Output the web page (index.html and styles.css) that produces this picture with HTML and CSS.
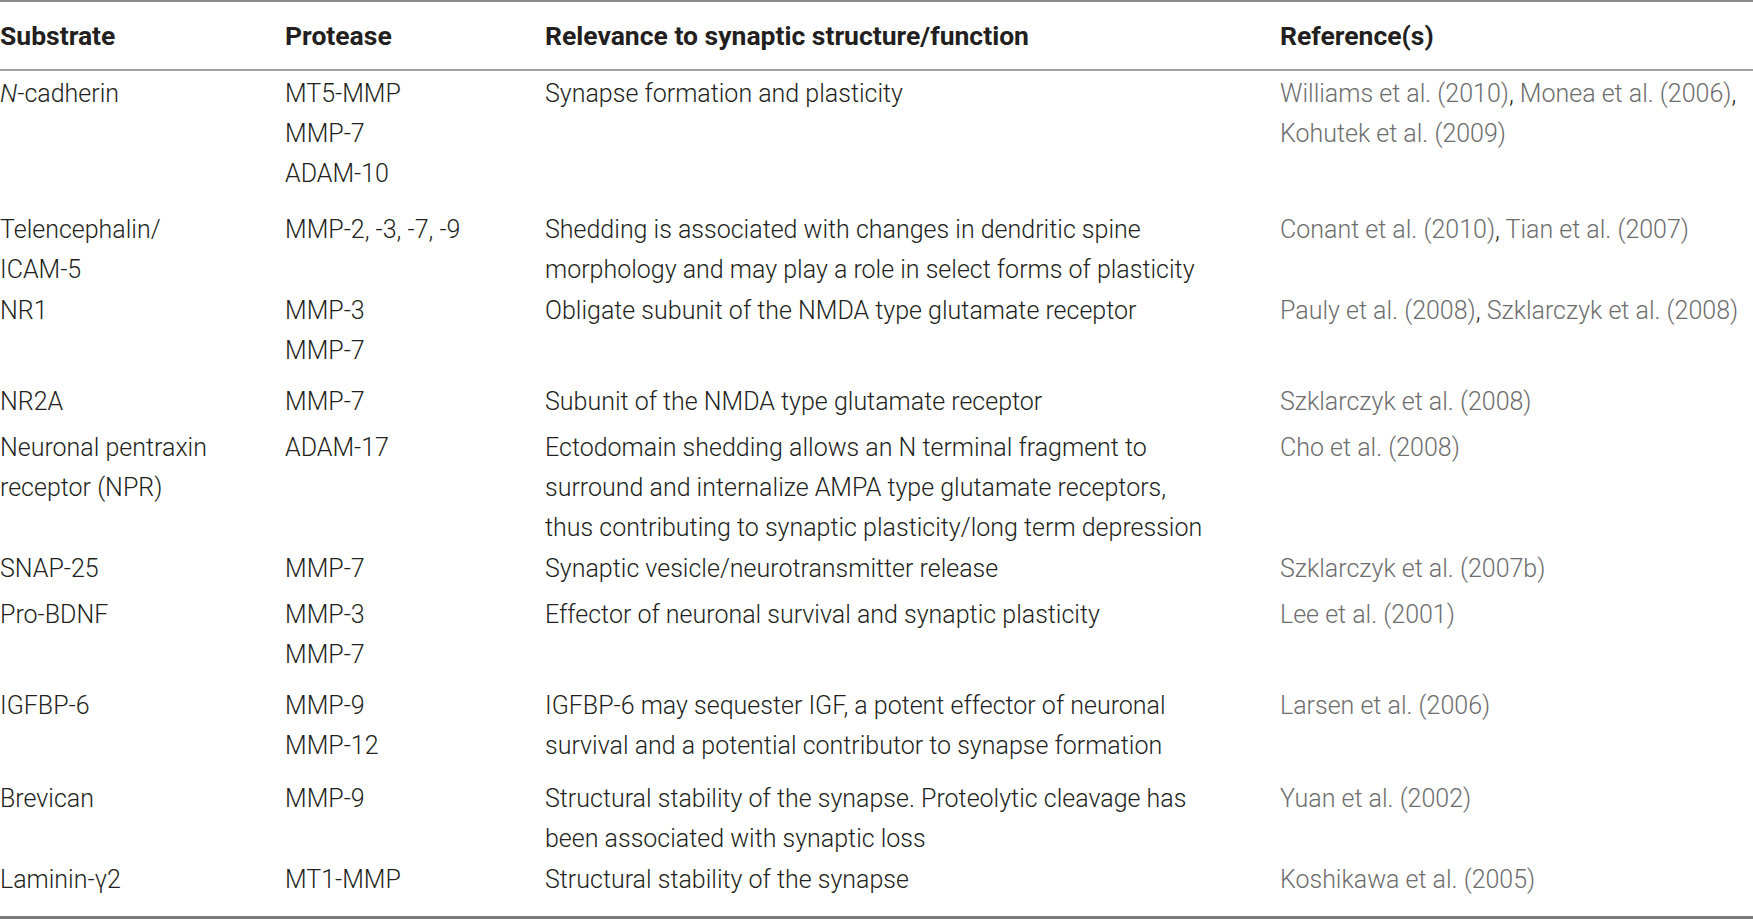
FILE: index.html
```html
<!DOCTYPE html>
<html lang="en">
<head>
<meta charset="utf-8">
<title>Substrates of synaptic proteases</title>
<link rel="stylesheet" href="styles.css">
</head>
<body>
<div class="table">
  <div class="row head">
    <div class="cell">Substrate</div>
    <div class="cell">Protease</div>
    <div class="cell">Relevance to synaptic structure/function</div>
    <div class="cell">Reference(s)</div>
  </div>

  <div class="row first gap-16">
    <div class="cell"><i>N</i>-cadherin</div>
    <div class="cell">MT5-MMP<br>MMP-7<br>ADAM-10</div>
    <div class="cell">Synapse formation and plasticity</div>
    <div class="cell"><span class="ref">Williams et al. (2010)</span>, <span class="ref">Monea et al. (2006)</span>,<br><span class="ref">Kohutek et al. (2009)</span></div>
  </div>

  <div class="row gap-1">
    <div class="cell">Telencephalin/<br>ICAM-5</div>
    <div class="cell">MMP-2, -3, -7, -9</div>
    <div class="cell">Shedding is associated with changes in dendritic spine<br>morphology and may play a role in select forms of plasticity</div>
    <div class="cell"><span class="ref">Conant et al. (2010)</span>, <span class="ref">Tian et al. (2007)</span></div>
  </div>

  <div class="row gap-11">
    <div class="cell">NR1</div>
    <div class="cell">MMP-3<br>MMP-7</div>
    <div class="cell">Obligate subunit of the NMDA type glutamate receptor</div>
    <div class="cell"><span class="ref">Pauly et al. (2008)</span>, <span class="ref">Szklarczyk et al. (2008)</span></div>
  </div>

  <div class="row gap-6">
    <div class="cell">NR2A</div>
    <div class="cell">MMP-7</div>
    <div class="cell">Subunit of the NMDA type glutamate receptor</div>
    <div class="cell"><span class="ref">Szklarczyk et al. (2008)</span></div>
  </div>

  <div class="row gap-1">
    <div class="cell">Neuronal pentraxin<br>receptor (NPR)</div>
    <div class="cell">ADAM-17</div>
    <div class="cell">Ectodomain shedding allows an N terminal fragment to<br>surround and internalize AMPA type glutamate receptors,<br>thus contributing to synaptic plasticity/long term depression</div>
    <div class="cell"><span class="ref">Cho et al. (2008)</span></div>
  </div>

  <div class="row gap-6">
    <div class="cell">SNAP-25</div>
    <div class="cell">MMP-7</div>
    <div class="cell">Synaptic vesicle/neurotransmitter release</div>
    <div class="cell"><span class="ref">Szklarczyk et al. (2007b)</span></div>
  </div>

  <div class="row gap-11">
    <div class="cell">Pro-BDNF</div>
    <div class="cell">MMP-3<br>MMP-7</div>
    <div class="cell">Effector of neuronal survival and synaptic plasticity</div>
    <div class="cell"><span class="ref">Lee et al. (2001)</span></div>
  </div>

  <div class="row gap-13">
    <div class="cell">IGFBP-6</div>
    <div class="cell">MMP-9<br>MMP-12</div>
    <div class="cell">IGFBP-6 may sequester IGF, a potent effector of neuronal<br>survival and a potential contributor to synapse formation</div>
    <div class="cell"><span class="ref">Larsen et al. (2006)</span></div>
  </div>

  <div class="row gap-1">
    <div class="cell">Brevican</div>
    <div class="cell">MMP-9</div>
    <div class="cell">Structural stability of the synapse. Proteolytic cleavage has<br>been associated with synaptic loss</div>
    <div class="cell"><span class="ref">Yuan et al. (2002)</span></div>
  </div>

  <div class="row gap-16">
    <div class="cell">Laminin-γ2</div>
    <div class="cell">MT1-MMP</div>
    <div class="cell">Structural stability of the synapse</div>
    <div class="cell"><span class="ref">Koshikawa et al. (2005)</span></div>
  </div>
</div>
</body>
</html>
```
FILE: styles.css
```css
html, body {
  margin: 0;
  padding: 0;
  background: #ffffff;
}

body {
  font-family: Roboto, "Liberation Sans", Arial, sans-serif;
  font-weight: 300;
  font-size: 25px;
  line-height: 40px;
  color: #231f20;
}

.table {
  width: 1753px;
  border-top: 2px solid #8c8c8c;
  border-bottom: 3px solid #7a7a7a;
}

.row {
  display: grid;
  grid-template-columns: 285px 260px 735px 1fr;
}

.cell {
  white-space: nowrap;
}

.head {
  font-weight: 700;
  font-size: 26.5px;
  padding: 14px 0 13px;
  border-bottom: 2px solid #a3a3a3;
}

.first {
  padding-top: 3px;
}

.gap-1 { padding-bottom: 1px; }
.gap-6 { padding-bottom: 6px; }
.gap-11 { padding-bottom: 11px; }
.gap-13 { padding-bottom: 13px; }
.gap-16 { padding-bottom: 16px; }

.ref {
  color: #6d6d6d;
}
```
